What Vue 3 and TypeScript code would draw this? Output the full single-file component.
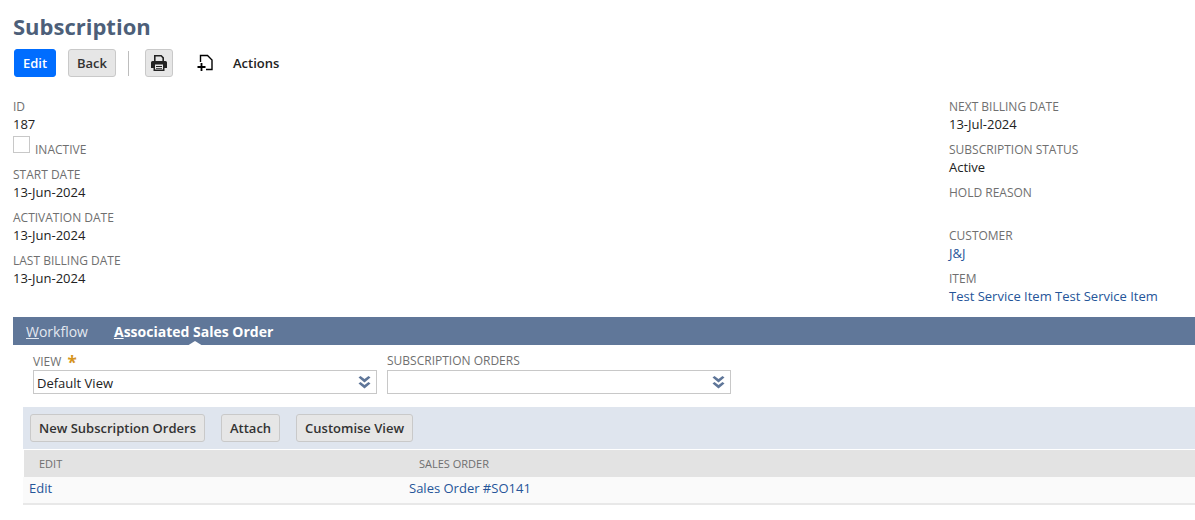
<template>
  <div class="page">
    <h1 class="title">Subscription</h1>

    <div class="toolbar">
      <button class="btn primary">Edit</button>
      <button class="btn back">Back</button>
      <span class="sep"></span>
      <button class="btn icon-btn" aria-label="Print">
        <svg width="18" height="18" viewBox="0 0 18 18">
          <path d="M4 1h7.500L14 3.500V7h-1.600V4.200L10.900 2.600H5.600V7H4z" fill="#222" />
          <path d="M2.500 7h13A1.500 1.500 0 0 1 17 8.500V14h-2.500v3h-11v-3H1V8.500A1.500 1.500 0 0 1 2.500 7z" fill="#222" />
          <path d="M5 10.500h8v5H5z" fill="#e6e6e6" />
          <path d="M6 12h6v1H6zM6 14h6v.8H6z" fill="#222" />
        </svg>
      </button>
      <span class="new-icon">
        <svg width="17" height="18" viewBox="0 0 17 18">
          <path d="M3.500 8V1.500H10.500L15 6V15.500H9" fill="none" stroke="#000" stroke-width="1.400" />
          <path d="M0.500 13h8M4.500 9v8" fill="none" stroke="#000" stroke-width="1.800" />
        </svg>
      </span>
      <span class="actions">Actions</span>
    </div>

    <div class="fields">
      <div class="col">
        <div class="field" v-for="f in leftTop" :key="f.label">
          <div class="label">{{ f.label }}</div>
          <div class="value">{{ f.value }}</div>
        </div>
        <div class="check-row">
          <span class="checkbox"></span>
          <span class="label">INACTIVE</span>
        </div>
        <div class="field" v-for="f in leftBottom" :key="f.label">
          <div class="label">{{ f.label }}</div>
          <div class="value">{{ f.value }}</div>
        </div>
      </div>
      <div class="col right">
        <div class="field" v-for="f in rightFields" :key="f.label">
          <div class="label">{{ f.label }}</div>
          <div class="value" :class="{ link: f.link }">{{ f.value }}</div>
        </div>
      </div>
    </div>

    <div class="tabs">
      <span class="tab"><u>W</u>orkflow</span>
      <span class="tab active"><u>A</u>ssociated Sales Order</span>
    </div>

    <div class="selects">
      <div class="select-wrap">
        <div class="label view-label">VIEW <span class="req">*</span></div>
        <div class="select">
          <span>Default View</span>
          <svg class="chev" width="13" height="13" viewBox="0 0 13 13">
            <path d="M0.500 1.500L2.500 0L6.500 3L10.500 0L12.500 1.500L6.500 6.500zM0.500 7.500L2.500 6L6.500 9L10.500 6L12.500 7.500L6.500 12.500z" fill="#5f7699" />
          </svg>
        </div>
      </div>
      <div class="select-wrap">
        <div class="label">SUBSCRIPTION ORDERS</div>
        <div class="select">
          <span></span>
          <svg class="chev" width="13" height="13" viewBox="0 0 13 13">
            <path d="M0.500 1.500L2.500 0L6.500 3L10.500 0L12.500 1.500L6.500 6.500zM0.500 7.500L2.500 6L6.500 9L10.500 6L12.500 7.500L6.500 12.500z" fill="#5f7699" />
          </svg>
        </div>
      </div>
    </div>

    <div class="sublist">
      <div class="sub-bar">
        <button class="btn sub-btn">New Subscription Orders</button>
        <button class="btn sub-btn">Attach</button>
        <button class="btn sub-btn">Customise View</button>
      </div>
      <div class="grid head">
        <span class="head-edit">EDIT</span>
        <span>SALES ORDER</span>
      </div>
      <div class="grid row">
        <a class="cell-edit">Edit</a>
        <a class="cell-order">Sales Order #SO141</a>
      </div>
    </div>
  </div>
</template>

<script setup lang="ts">
interface Field {
  label: string
  value: string
  link?: boolean
}

const leftTop: Field[] = [{ label: 'ID', value: '187' }]

const leftBottom: Field[] = [
  { label: 'START DATE', value: '13-Jun-2024' },
  { label: 'ACTIVATION DATE', value: '13-Jun-2024' },
  { label: 'LAST BILLING DATE', value: '13-Jun-2024' }
]

const rightFields: Field[] = [
  { label: 'NEXT BILLING DATE', value: '13-Jul-2024' },
  { label: 'SUBSCRIPTION STATUS', value: 'Active' },
  { label: 'HOLD REASON', value: '\u00a0' },
  { label: 'CUSTOMER', value: 'J&J', link: true },
  { label: 'ITEM', value: 'Test Service Item Test Service Item', link: true }
]
</script>

<style>
html,
body {
  margin: 0;
  background: #fff;
}
</style>

<style scoped>
.page {
  width: 1195px;
  height: 520px;
  overflow: hidden;
  font-family: "Open Sans", "Liberation Sans", sans-serif;
  font-size: 13px;
  color: #222;
  box-sizing: border-box;
  padding-top: 11px;
}

.title {
  margin: 0 0 0 13px;
  font-size: 22px;
  line-height: 30px;
  font-weight: 700;
  color: #4d5f79;
}

.toolbar {
  display: flex;
  align-items: center;
  height: 28px;
  margin-top: 8px;
  padding-left: 14px;
}

.btn {
  font-family: inherit;
  font-size: 13px;
  font-weight: 600;
  color: #333;
  background: #e6e6e6;
  border: 1px solid #c9c9c9;
  border-radius: 3px;
  height: 28px;
  padding: 0;
  box-sizing: border-box;
}

.primary {
  width: 42px;
  background: #006dff;
  border-color: #006dff;
  color: #fff;
}

.back {
  width: 48px;
  margin-left: 12px;
}

.sep {
  width: 1px;
  height: 25px;
  background: #bdbdbd;
  margin: 0 16px 0 12px;
}

.icon-btn {
  width: 28px;
  display: flex;
  align-items: center;
  justify-content: center;
}

.new-icon {
  display: flex;
  margin-left: 24px;
}

.actions {
  margin-left: 19px;
  font-weight: 600;
}

.fields {
  display: flex;
  justify-content: space-between;
  margin-top: 21px;
  height: 219px;
  padding-left: 13px;
}

.col.right {
  width: 246px;
}

.field {
  height: 43px;
}

.label {
  font-size: 12px;
  line-height: 18px;
  color: #6f6f6f;
}

.value {
  font-size: 13px;
  line-height: 18px;
  margin-top: -1px;
  color: #222;
}

.link {
  color: #255599;
}

.check-row {
  display: flex;
  align-items: flex-end;
  height: 25px;
  margin-top: -7px;
  margin-bottom: 7px;
}

.checkbox {
  width: 15px;
  height: 15px;
  border: 1px solid #c8c8c8;
  margin-right: 5px;
  margin-bottom: 6px;
}

.tabs {
  display: flex;
  align-items: center;
  height: 28px;
  margin-left: 13px;
  padding-left: 13px;
  background: #607799;
  position: relative;
}

.tab {
  font-size: 14px;
  color: #e3e8f0;
  margin-right: 26px;
}

.tab.active {
  font-weight: 700;
  color: #fff;
  position: relative;
}

.tab.active::after {
  content: "";
  position: absolute;
  left: 73px;
  bottom: -5px;
  border-left: 8px solid transparent;
  border-right: 8px solid transparent;
  border-bottom: 5px solid #fff;
}

.selects {
  display: flex;
  gap: 10px;
  margin-top: 7px;
  padding-left: 33px;
}

.select-wrap {
  width: 344px;
}

.view-label {
  padding-top: 1px;
  margin-bottom: -1px;
}

.req {
  font-size: 17px;
  line-height: 0;
  vertical-align: -3px;
  color: #d5941c;
  font-weight: 700;
  margin-left: 3px;
}

.select {
  display: flex;
  align-items: center;
  justify-content: space-between;
  height: 24px;
  border: 1px solid #c8c8c8;
  box-sizing: border-box;
  padding: 1px 5px 0 3px;
  line-height: 22px;
}

.chev {
  margin-top: -1px;
}

.sublist {
  margin: 13px 0 0 23px;
}

.sub-bar {
  display: flex;
  align-items: center;
  gap: 16px;
  height: 42px;
  padding-left: 7px;
  background: #dfe5ee;
}

.sub-btn {
  padding: 0 8px;
}

.grid {
  display: flex;
}

.head {
  height: 27px;
  margin: 1px 0 0 1px;
  align-items: center;
  background: #e3e3e3;
  font-size: 11px;
  color: #6f6f6f;
}

.head-edit {
  width: 395px;
  padding-left: 15px;
  box-sizing: border-box;
}

.row {
  height: 28px;
  box-sizing: border-box;
  align-items: center;
  background: #fafafa;
  border-bottom: 2px solid #e8e8e8;
  color: #255599;
  padding-left: 6px;
  padding-bottom: 5px;
}

.cell-edit {
  width: 380px;
}
</style>
